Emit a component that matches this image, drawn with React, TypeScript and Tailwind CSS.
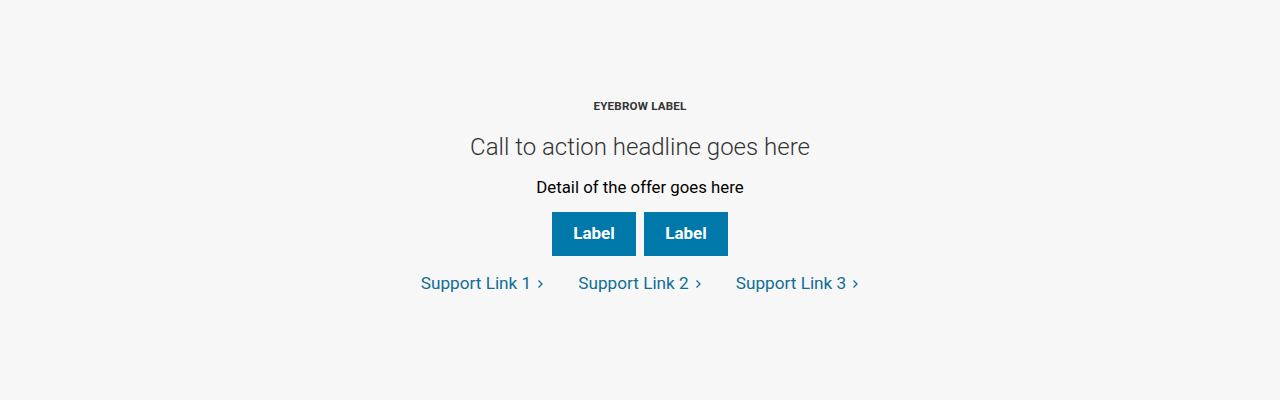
const links = ["Support Link 1", "Support Link 2", "Support Link 3"];

const Chevron = () => (
  <svg width="8" height="10" viewBox="0 0 8 10" fill="none" className="ml-[5px] mt-[2px]">
    <path d="M2.5 1.5 6 5 2.5 8.5" stroke="currentColor" strokeWidth="1.3" />
  </svg>
);

export default function App() {
  return (
    <div className="min-h-[400px] w-full bg-[#f7f7f7] font-['Roboto',sans-serif] flex flex-col items-center pt-[98px]">
      <p className="text-[11.6px] leading-[16px] font-bold uppercase tracking-[0.2px] text-[#333]">
        Eyebrow label
      </p>
      <h1 className="mt-[17px] text-[24px] leading-[32px] font-light text-[#333]">
        Call to action headline goes here
      </h1>
      <p className="mt-[12px] text-[16.8px] leading-[24px] text-black">Detail of the offer goes here</p>
      <div className="mt-[13px] flex gap-2">
        <button className="w-[84px] h-[44px] bg-[#0078aa] text-white text-[17px] font-bold">Label</button>
        <button className="w-[84px] h-[44px] bg-[#0078aa] text-white text-[17px] font-bold">Label</button>
      </div>
      <div className="mt-[16px] flex gap-[34px]">
        {links.map((l) => (
          <a key={l} href="#" className="flex items-center text-[17.2px] leading-[22px] text-[#0f6e96]">
            {l}
            <Chevron />
          </a>
        ))}
      </div>
    </div>
  );
}
